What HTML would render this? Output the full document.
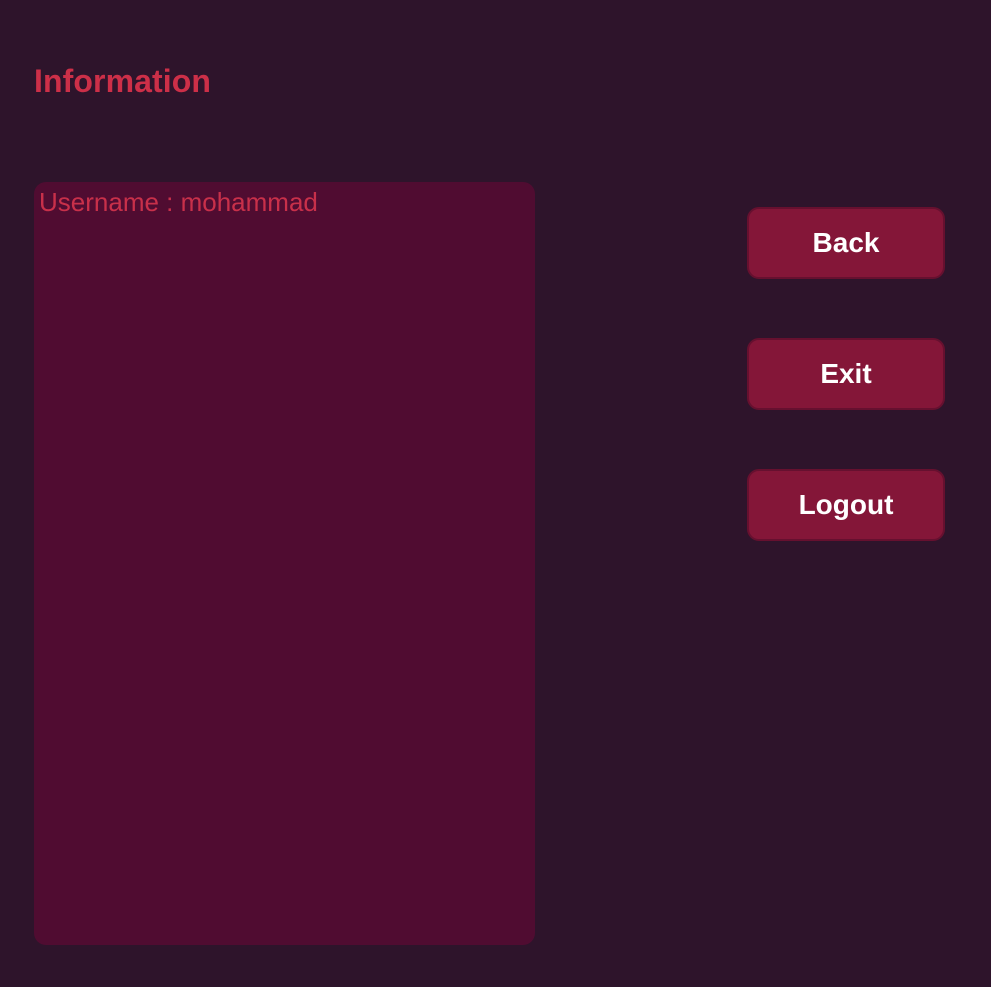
<!DOCTYPE html>
<html><head><style>
html,body{margin:0;padding:0;}
body{width:991px;height:987px;background:#2e142b;position:relative;overflow:hidden;font-family:"Liberation Sans",sans-serif;}
.t{position:absolute;left:34px;top:61px;font-size:32px;font-weight:bold;color:#cc2f48;line-height:40px;letter-spacing:0.1px;}
.p{position:absolute;left:34px;top:182px;width:501px;height:763px;background:#500c31;border-radius:12px;}
.u{position:absolute;left:39px;top:187px;font-size:26px;color:#c8304a;line-height:30px;}
.b{position:absolute;left:747px;width:194px;height:68px;background:#841638;border:2px solid #66102f;border-radius:12px;color:#fff;font-weight:bold;font-size:28px;text-align:center;line-height:68px;}
</style></head><body>
<div class="t">Information</div>
<div class="p"></div>
<div class="u">Username : mohammad</div>
<div class="b" style="top:207px">Back</div>
<div class="b" style="top:338px">Exit</div>
<div class="b" style="top:469px">Logout</div>
</body></html>
